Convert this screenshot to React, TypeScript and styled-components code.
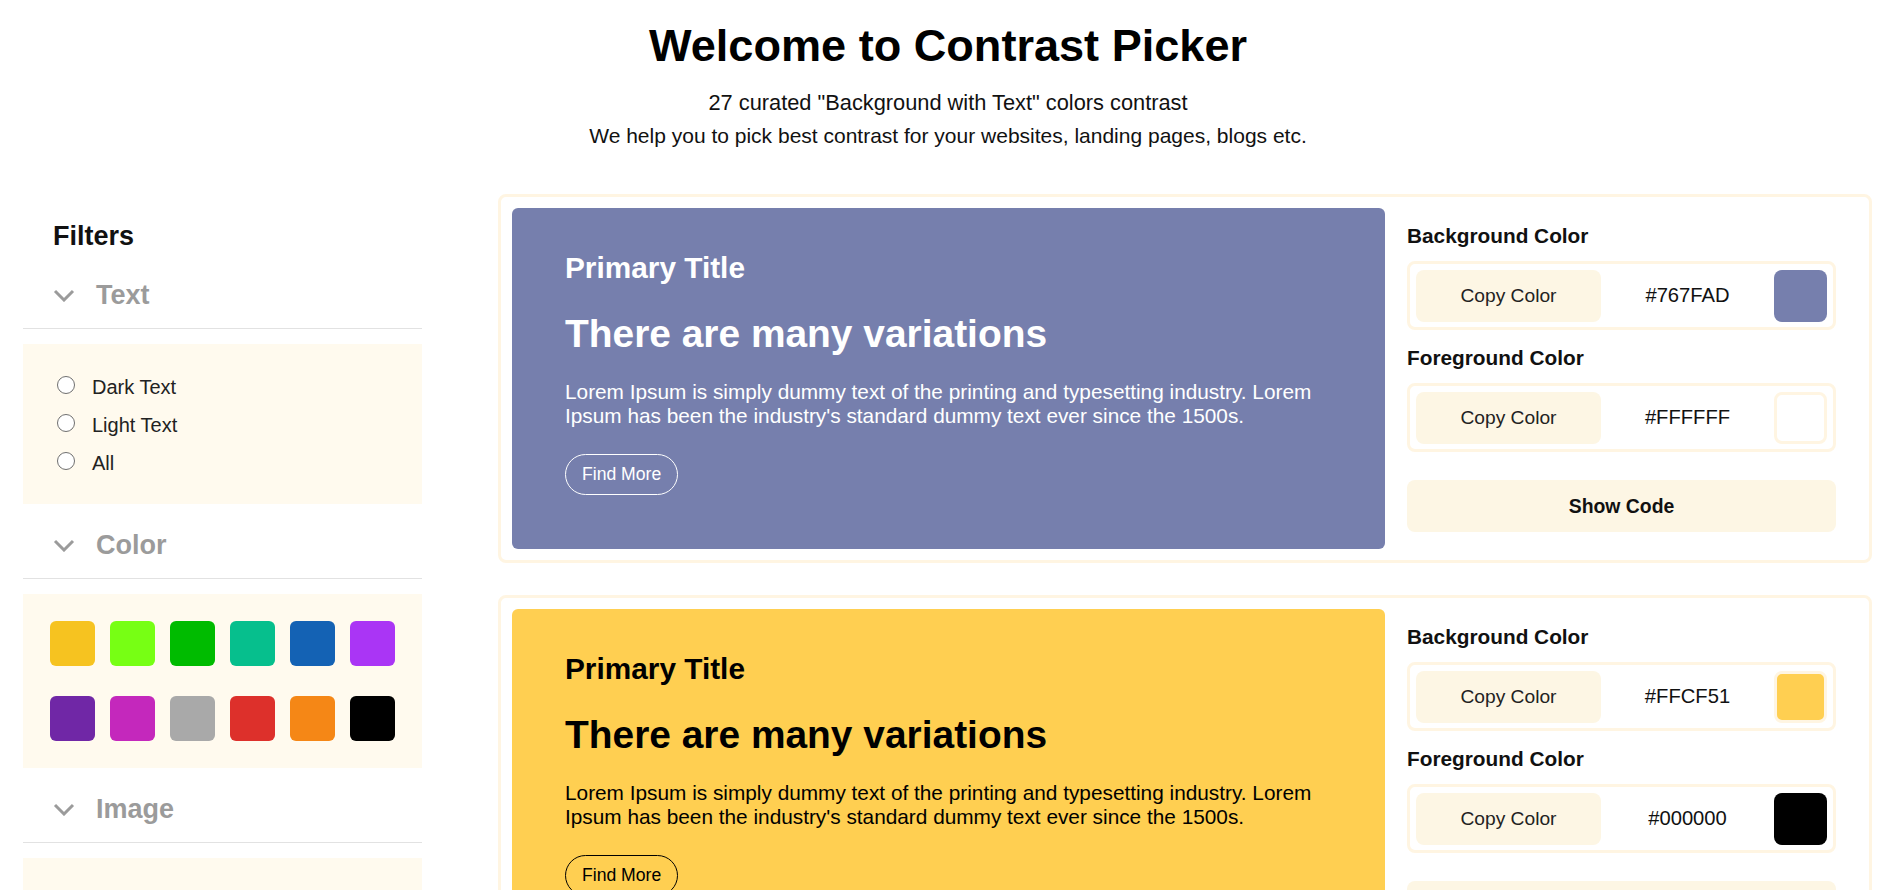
import React from 'react';
import styled, { createGlobalStyle } from 'styled-components';

const GlobalStyle = createGlobalStyle`
  * {
    box-sizing: border-box;
  }
  body {
    margin: 0;
    background: #ffffff;
    color: #000000;
    font-family: "Liberation Sans", Arial, sans-serif;
  }
`;

const Page = styled.div`
  width: 100%;
`;

const Hero = styled.header`
  padding: 19px 0 0 7px;
  text-align: center;
`;

const Title = styled.h1`
  margin: 0;
  font-size: 45.1px;
  line-height: 54px;
  font-weight: 700;
`;

const Lead = styled.p<{ size: number; gap: number }>`
  margin: ${(p) => p.gap}px 0 0;
  font-size: ${(p) => p.size}px;
  line-height: 1.2;
  color: #111;
`;

const Main = styled.main`
  display: flex;
  align-items: flex-start;
  padding: 46px 17px 0 23px;
`;

const Sidebar = styled.aside`
  flex: 0 0 399px;
  margin-right: 76px;
  padding-top: 26px;
`;

const SidebarTitle = styled.h2`
  margin: 0 0 2px;
  padding-left: 30px;
  font-size: 27px;
  line-height: 32px;
  font-weight: 700;
  color: #111;
`;

const SectionHeader = styled.div`
  display: flex;
  align-items: center;
  gap: 21px;
  padding: 25px 0 17px 30px;
  border-bottom: 1px solid #e2e2e2;
  font-size: 27px;
  line-height: 32px;
  font-weight: 700;
  color: #9b9b9b;
`;

const Panel = styled.div`
  margin-top: 15px;
  background: #fffaee;
`;

const RadioList = styled.div`
  padding: 24px 0 22px 34px;
`;

const RadioRow = styled.label`
  display: flex;
  align-items: center;
  height: 38px;
  font-size: 20px;
  color: #222;
`;

const RadioDot = styled.span`
  width: 18px;
  height: 18px;
  margin: 0 17px 5px 0;
  border: 1.5px solid #6f6f6f;
  border-radius: 50%;
  background: #ffffff;
`;

const SwatchGrid = styled.div`
  display: grid;
  grid-template-columns: repeat(6, 45px);
  column-gap: 15px;
  row-gap: 30px;
  padding: 27px;
`;

const FilterSwatch = styled.button<{ color: string }>`
  width: 45px;
  height: 45px;
  padding: 0;
  border: none;
  border-radius: 6px;
  background: ${(p) => p.color};
`;

const CardList = styled.div`
  flex: 1;
  display: flex;
  flex-direction: column;
  gap: 32px;
`;

const Card = styled.section`
  display: grid;
  grid-template-columns: 873fr 473fr;
  padding: 11px;
  border: 3px solid #fff5e2;
  border-radius: 8px;
`;

const Preview = styled.div<{ bg: string; fg: string }>`
  padding: 42px 53px 54px;
  border-radius: 6px;
  background: ${(p) => p.bg};
  color: ${(p) => p.fg};
`;

const PreviewKicker = styled.h3`
  margin: 0;
  font-size: 29.8px;
  line-height: 35.5px;
  font-weight: 700;
`;

const PreviewHeading = styled.h2`
  margin: 25px 0 0;
  font-size: 38.9px;
  line-height: 46.5px;
  font-weight: 700;
`;

const PreviewText = styled.p`
  margin: 23px 0 0;
  font-size: 20.8px;
  line-height: 23.5px;
`;

const FindMore = styled.button<{ fg: string }>`
  margin-top: 27px;
  padding: 9px 16px;
  border: 1px solid ${(p) => p.fg};
  border-radius: 21px;
  background: transparent;
  color: ${(p) => p.fg};
  font-family: inherit;
  font-size: 17.6px;
  line-height: 21px;
`;

const Details = styled.div`
  display: flex;
  flex-direction: column;
  padding: 16px 22px 16px;
`;

const DetailLabel = styled.h4`
  margin: 0 0 13px;
  font-size: 20.8px;
  line-height: 24px;
  font-weight: 700;
  color: #111;
`;

const ColorRow = styled.div`
  display: flex;
  align-items: center;
  margin-bottom: 16px;
  padding: 5.5px 6px;
  border: 3px solid #fff5e2;
  border-radius: 8px;
`;

const CopyButton = styled.button`
  flex: 0 0 185px;
  height: 52px;
  border: none;
  border-radius: 8px;
  background: #fdf6e4;
  color: #222;
  font-family: inherit;
  font-size: 19.2px;
`;

const HexValue = styled.span`
  flex: 1;
  text-align: center;
  font-size: 20.2px;
  color: #111;
`;

const ColorChip = styled.span<{ color: string; light?: boolean }>`
  flex: 0 0 53px;
  height: 52px;
  border-radius: 8px;
  border: ${(p) => (p.light ? '3px solid #fff5e2' : 'none')};
  background: ${(p) => p.color};
`;

const ShowCode = styled.button`
  height: 52px;
  margin-top: 12px;
  border: none;
  border-radius: 8px;
  background: #fdf6e4;
  color: #111;
  font-family: inherit;
  font-size: 19.4px;
  font-weight: 700;
`;

const Chevron = () => (
  <svg width="22" height="13" viewBox="0 0 22 13" fill="none">
    <polyline points="2,2 11,11 20,2" stroke="#9b9b9b" strokeWidth="3" />
  </svg>
);

type Combo = { bg: string; fg: string; bgLight?: boolean; fgLight?: boolean };

const combos: Combo[] = [
  { bg: '#767FAD', fg: '#FFFFFF', fgLight: true },
  { bg: '#FFCF51', fg: '#000000', bgLight: true },
  { bg: '#1462B4', fg: '#FFFFFF', fgLight: true },
];

const filterColors = [
  '#F6C320', '#77FF14', '#00BB00', '#06BF8D', '#1462B4', '#AA35F5',
  '#7027A6', '#C428BC', '#A9A9A9', '#DD302B', '#F58716', '#000000',
];

const RadioGroup = ({ options }: { options: string[] }) => (
  <RadioList>
    {options.map((o) => (
      <RadioRow key={o}>
        <RadioDot />
        {o}
      </RadioRow>
    ))}
  </RadioList>
);

const ColorCard = ({ combo }: { combo: Combo }) => (
  <Card>
    <Preview bg={combo.bg} fg={combo.fg}>
      <PreviewKicker>Primary Title</PreviewKicker>
      <PreviewHeading>There are many variations</PreviewHeading>
      <PreviewText>
        Lorem Ipsum is simply dummy text of the printing and typesetting industry. Lorem Ipsum has
        been the industry's standard dummy text ever since the 1500s.
      </PreviewText>
      <FindMore fg={combo.fg}>Find More</FindMore>
    </Preview>
    <Details>
      <DetailLabel>Background Color</DetailLabel>
      <ColorRow>
        <CopyButton>Copy Color</CopyButton>
        <HexValue>{combo.bg}</HexValue>
        <ColorChip color={combo.bg} light={combo.bgLight} />
      </ColorRow>
      <DetailLabel>Foreground Color</DetailLabel>
      <ColorRow>
        <CopyButton>Copy Color</CopyButton>
        <HexValue>{combo.fg}</HexValue>
        <ColorChip color={combo.fg} light={combo.fgLight} />
      </ColorRow>
      <ShowCode>Show Code</ShowCode>
    </Details>
  </Card>
);

export default function App() {
  return (
    <Page>
      <GlobalStyle />
      <Hero>
        <Title>Welcome to Contrast Picker</Title>
        <Lead size={21.8} gap={17}>27 curated "Background with Text" colors contrast</Lead>
        <Lead size={21} gap={7}>We help you to pick best contrast for your websites, landing pages, blogs etc.</Lead>
      </Hero>
      <Main>
        <Sidebar>
          <SidebarTitle>Filters</SidebarTitle>
          <SectionHeader>
            <Chevron />
            Text
          </SectionHeader>
          <Panel>
            <RadioGroup options={['Dark Text', 'Light Text', 'All']} />
          </Panel>
          <SectionHeader>
            <Chevron />
            Color
          </SectionHeader>
          <Panel>
            <SwatchGrid>
              {filterColors.map((c) => (
                <FilterSwatch key={c} color={c} />
              ))}
            </SwatchGrid>
          </Panel>
          <SectionHeader>
            <Chevron />
            Image
          </SectionHeader>
          <Panel>
            <RadioGroup options={['With Image', 'Without Image', 'All']} />
          </Panel>
        </Sidebar>
        <CardList>
          {combos.map((c) => (
            <ColorCard key={c.bg} combo={c} />
          ))}
        </CardList>
      </Main>
    </Page>
  );
}
